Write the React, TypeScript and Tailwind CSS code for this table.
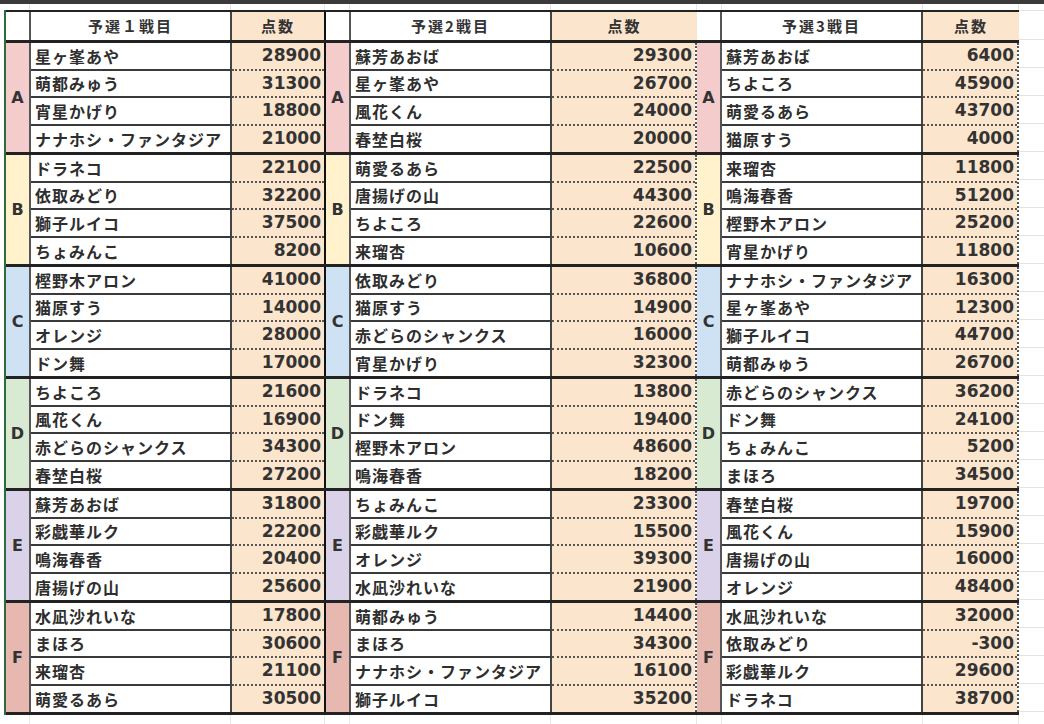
import React from "react";

type Row = [string, number];

const t1: Row[][] = [
  [["星ヶ峯あや", 28900], ["萌都みゅう", 31300], ["宵星かげり", 18800], ["ナナホシ・ファンタジア", 21000]],
  [["ドラネコ", 22100], ["依取みどり", 32200], ["獅子ルイコ", 37500], ["ちょみんこ", 8200]],
  [["樫野木アロン", 41000], ["猫原すう", 14000], ["オレンジ", 28000], ["ドン舞", 17000]],
  [["ちよころ", 21600], ["風花くん", 16900], ["赤どらのシャンクス", 34300], ["春埜白桜", 27200]],
  [["蘇芳あおば", 31800], ["彩戯華ルク", 22200], ["鳴海春香", 20400], ["唐揚げの山", 25600]],
  [["水凪沙れいな", 17800], ["まほろ", 30600], ["来瑠杏", 21100], ["萌愛るあら", 30500]],
];

const t2: Row[][] = [
  [["蘇芳あおば", 29300], ["星ヶ峯あや", 26700], ["風花くん", 24000], ["春埜白桜", 20000]],
  [["萌愛るあら", 22500], ["唐揚げの山", 44300], ["ちよころ", 22600], ["来瑠杏", 10600]],
  [["依取みどり", 36800], ["猫原すう", 14900], ["赤どらのシャンクス", 16000], ["宵星かげり", 32300]],
  [["ドラネコ", 13800], ["ドン舞", 19400], ["樫野木アロン", 48600], ["鳴海春香", 18200]],
  [["ちょみんこ", 23300], ["彩戯華ルク", 15500], ["オレンジ", 39300], ["水凪沙れいな", 21900]],
  [["萌都みゅう", 14400], ["まほろ", 34300], ["ナナホシ・ファンタジア", 16100], ["獅子ルイコ", 35200]],
];

const t3: Row[][] = [
  [["蘇芳あおば", 6400], ["ちよころ", 45900], ["萌愛るあら", 43700], ["猫原すう", 4000]],
  [["来瑠杏", 11800], ["鳴海春香", 51200], ["樫野木アロン", 25200], ["宵星かげり", 11800]],
  [["ナナホシ・ファンタジア", 16300], ["星ヶ峯あや", 12300], ["獅子ルイコ", 44700], ["萌都みゅう", 26700]],
  [["赤どらのシャンクス", 36200], ["ドン舞", 24100], ["ちょみんこ", 5200], ["まほろ", 34500]],
  [["春埜白桜", 19700], ["風花くん", 15900], ["唐揚げの山", 16000], ["オレンジ", 48400]],
  [["水凪沙れいな", 32000], ["依取みどり", -300], ["彩戯華ルク", 29600], ["ドラネコ", 38700]],
];

const letters = ["A", "B", "C", "D", "E", "F"];
const groupBg = [
  "bg-[#f4cccc]",
  "bg-[#fff2cc]",
  "bg-[#cfe2f3]",
  "bg-[#d9ead3]",
  "bg-[#d9d2e9]",
  "bg-[#e6b8af]",
];

const tables = [
  {
    title: "予選１戦目",
    data: t1,
    width: "w-[320px]",
    wrapBody: "border-r-2 border-[#111]",
    wrapHead: "border-r-2 border-[#111]",
  },
  {
    title: "予選2戦目",
    data: t2,
    width: "w-[371px]",
    wrapBody: "border-r-2 border-dotted border-[#555]",
    wrapHead: "",
  },
  {
    title: "予選3戦目",
    data: t3,
    width: "w-[322px]",
    wrapBody: "border-r-2 border-dotted border-[#555]",
    wrapHead: "",
  },
];

const nameFont = "font-['Noto_Sans_CJK_JP',sans-serif] font-bold text-[16px] tracking-[1px]";
const numFont = "font-['DejaVu_Sans',sans-serif] font-bold text-[17px]";

function HeaderSeg({ t }: { t: (typeof tables)[number] }) {
  return (
    <div className={`${t.width} flex shrink-0 ${t.wrapHead}`}>
      <div className="w-[25px] shrink-0 bg-white border-r-2 border-[#555]" />
      <div className="w-[201px] shrink-0 border-r-2 border-[#444] bg-white flex items-center justify-center">
        <span className="font-['Noto_Sans_CJK_JP',sans-serif] font-bold text-[15px] tracking-[2px] text-[#333]">
          {t.title}
        </span>
      </div>
      <div className="flex-1 bg-[#fce5cd] flex items-center justify-center">
        <span className="font-['Noto_Sans_CJK_JP',sans-serif] font-bold text-[15px] tracking-[2px] text-[#333]">
          点数
        </span>
      </div>
    </div>
  );
}

function GroupSeg({ t, gi }: { t: (typeof tables)[number]; gi: number }) {
  const rows = t.data[gi];
  return (
    <div className={`${t.width} flex shrink-0 ${t.wrapBody}`}>
      <div
        className={`w-[25px] shrink-0 border-r-2 border-[#555] ${groupBg[gi]} flex items-center justify-center`}
      >
        <span className="font-['DejaVu_Sans',sans-serif] font-bold text-[16px] text-[#333]">
          {letters[gi]}
        </span>
      </div>
      <div className="flex-1 flex flex-col">
        {rows.map(([name, score], ri) => (
          <div key={ri} className="flex flex-1">
            <div
              className={`w-[201px] shrink-0 bg-white border-r-2 border-[#444] flex items-center pl-[4px] ${
                ri < 3 ? "border-b-2 border-b-[#3a3a3a]" : ""
              }`}
            >
              <span className={`${nameFont} text-[#2e2e2e] whitespace-nowrap`}>{name}</span>
            </div>
            <div
              className={`flex-1 bg-[#fce5cd] flex items-center justify-end pr-[3px] ${
                ri < 3 ? "border-b-2 border-dotted border-b-[#555]" : ""
              }`}
            >
              <span className={`${numFont} text-[#333]`}>{score}</span>
            </div>
          </div>
        ))}
      </div>
    </div>
  );
}

function GridStrip({ h }: { h: string }) {
  return (
    <div className={`flex ${h}`}>
      <div className="w-[30px] border-r border-[#e6e6e6]" />
      <div className="w-[201px] border-r border-[#e6e6e6]" />
      <div className="w-[94px] border-r border-[#e6e6e6]" />
      <div className="w-[25px] border-r border-[#e6e6e6]" />
      <div className="w-[201px] border-r border-[#e6e6e6]" />
      <div className="w-[146px] border-r border-[#e6e6e6]" />
      <div className="w-[25px] border-r border-[#e6e6e6]" />
      <div className="w-[201px] border-r border-[#e6e6e6]" />
      <div className="w-[96px] border-r border-[#e6e6e6]" />
      <div className="flex-1" />
    </div>
  );
}

export default function App() {
  return (
    <div className="w-[1044px] h-[724px] bg-white overflow-hidden text-[#333]">
      <div className="h-[4px] bg-[#3a3a3a]" />
      <GridStrip h="h-[6px]" />
      <div className="flex">
        <div className="w-[4px] shrink-0" />
        <div className="border-l-2 border-[#2e6b3d] shrink-0">
          <div className="flex h-[30px] border-t-2 border-[#222]">
            {tables.map((t, i) => (
              <HeaderSeg key={i} t={t} />
            ))}
          </div>
          {letters.map((_, gi) => (
            <div
              key={gi}
              className={`flex h-[112px] border-t-[3px] border-[#222] ${
                gi === 5 ? "h-[115px] border-b-[3px]" : ""
              }`}
            >
              {tables.map((t, i) => (
                <GroupSeg key={i} t={t} gi={gi} />
              ))}
            </div>
          ))}
        </div>
        <div className="flex-1 flex flex-col">
          <div className="h-[30px] border-t border-b border-[#e3e3e3]" />
          {Array.from({ length: 24 }).map((_, i) => (
            <div key={i} className="h-[28px] border-b border-[#e3e3e3]" />
          ))}
        </div>
      </div>
      <GridStrip h="h-[10px]" />
    </div>
  );
}
